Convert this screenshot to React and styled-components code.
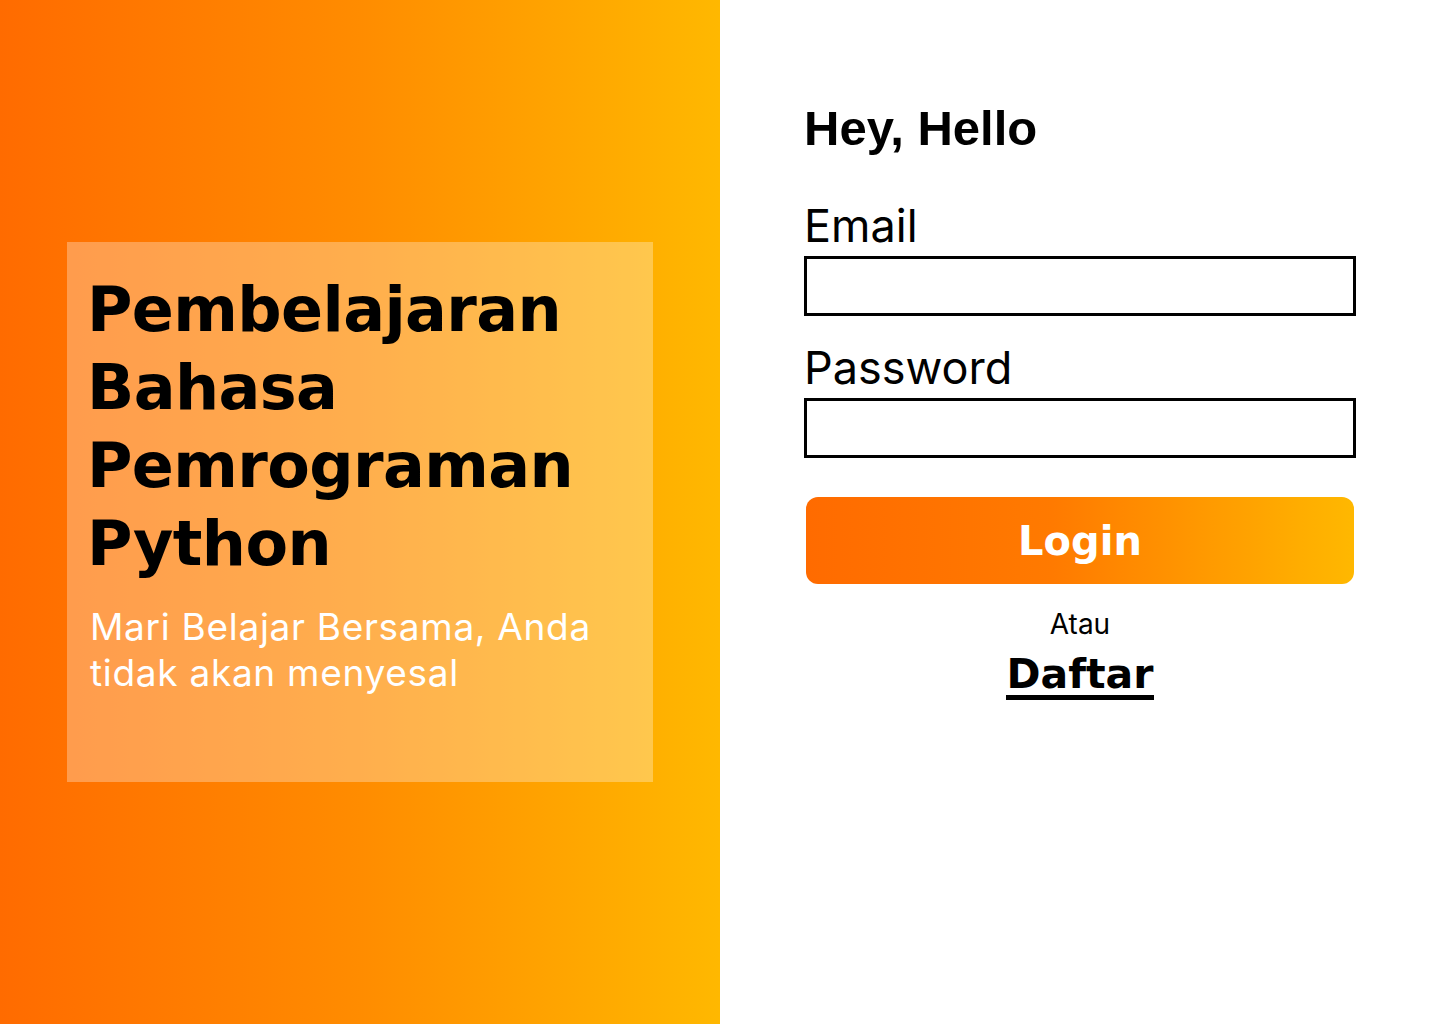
import styled, { createGlobalStyle } from "styled-components";

const GlobalStyle = createGlobalStyle`
  * { box-sizing: border-box; }
  body {
    margin: 0;
    font-family: Inter, "Noto Sans", sans-serif;
    background: #fff;
  }
`;

const Page = styled.div`
  display: grid;
  grid-template-columns: 720px 720px;
  height: 1024px;
  overflow: hidden;
`;

const Hero = styled.section`
  display: flex;
  align-items: center;
  justify-content: center;
  background: linear-gradient(90deg, #ff6b00 0%, #ff8c00 50%, #ffb800 100%);
`;

const HeroCard = styled.div`
  width: 586px;
  height: 540px;
  padding: 29px 20px 0 20px;
  background: rgba(255, 255, 255, 0.3);
`;

const HeroTitle = styled.h1`
  margin: 0;
  font-family: "DejaVu Sans", sans-serif;
  font-weight: 700;
  font-size: 62px;
  line-height: 78px;
  letter-spacing: -0.6px;
  color: #000;
`;

const HeroText = styled.p`
  margin: 21px 0 0 3px;
  font-size: 37px;
  line-height: 46px;
  letter-spacing: 0.7px;
  font-weight: 400;
  color: #fff;
`;

const FormSide = styled.section`
  display: flex;
  justify-content: center;
  padding-top: 104px;
`;

const Form = styled.form`
  width: 552px;
  display: flex;
  flex-direction: column;
`;

const Greeting = styled.h2`
  margin: 0 0 47px;
  font-family: "Liberation Sans", Arial, sans-serif;
  font-weight: 700;
  font-size: 49px;
  line-height: 48px;
  color: #000;
`;

const Label = styled.label`
  font-size: 45px;
  line-height: 54px;
  color: #000;
`;

const Input = styled.input`
  display: block;
  width: 100%;
  height: 60px;
  margin: 3px 0 ${(p) => p.$gap || 0}px;
  border: 3px solid #000;
  border-radius: 0;
  outline: none;
  background: #fff;
`;

const LoginButton = styled.button`
  margin: 39px 2px 0;
  height: 87px;
  border: none;
  border-radius: 12px;
  background: linear-gradient(90deg, #ff6b00 0%, #ff7a00 45%, #ffb800 100%);
  color: #fff;
  font-family: "DejaVu Sans", sans-serif;
  font-weight: 700;
  font-size: 40px;
  cursor: pointer;
`;

const Alt = styled.div`
  display: flex;
  flex-direction: column;
  align-items: center;
  margin-top: 23px;
`;

const AltText = styled.span`
  font-size: 28px;
  line-height: 34px;
  color: #000;
`;

const RegisterLink = styled.a`
  display: inline-block;
  margin-top: 13px;
  font-family: "DejaVu Sans", sans-serif;
  font-weight: 700;
  font-size: 41px;
  line-height: 41px;
  color: #000;
  text-decoration: none;
  border-bottom: 5px solid #000;
  cursor: pointer;
`;

export default function App() {
  return (
    <>
      <GlobalStyle />
      <Page>
        <Hero>
          <HeroCard>
            <HeroTitle>
              Pembelajaran
              <br />
              Bahasa
              <br />
              Pemrograman
              <br />
              Python
            </HeroTitle>
            <HeroText>Mari Belajar Bersama, Anda tidak akan menyesal</HeroText>
          </HeroCard>
        </Hero>
        <FormSide>
          <Form onSubmit={(e) => e.preventDefault()}>
            <Greeting>Hey, Hello</Greeting>
            <Label htmlFor="email">Email</Label>
            <Input id="email" type="email" $gap={25} />
            <Label htmlFor="password">Password</Label>
            <Input id="password" type="password" />
            <LoginButton type="submit">Login</LoginButton>
            <Alt>
              <AltText>Atau</AltText>
              <RegisterLink>Daftar</RegisterLink>
            </Alt>
          </Form>
        </FormSide>
      </Page>
    </>
  );
}
